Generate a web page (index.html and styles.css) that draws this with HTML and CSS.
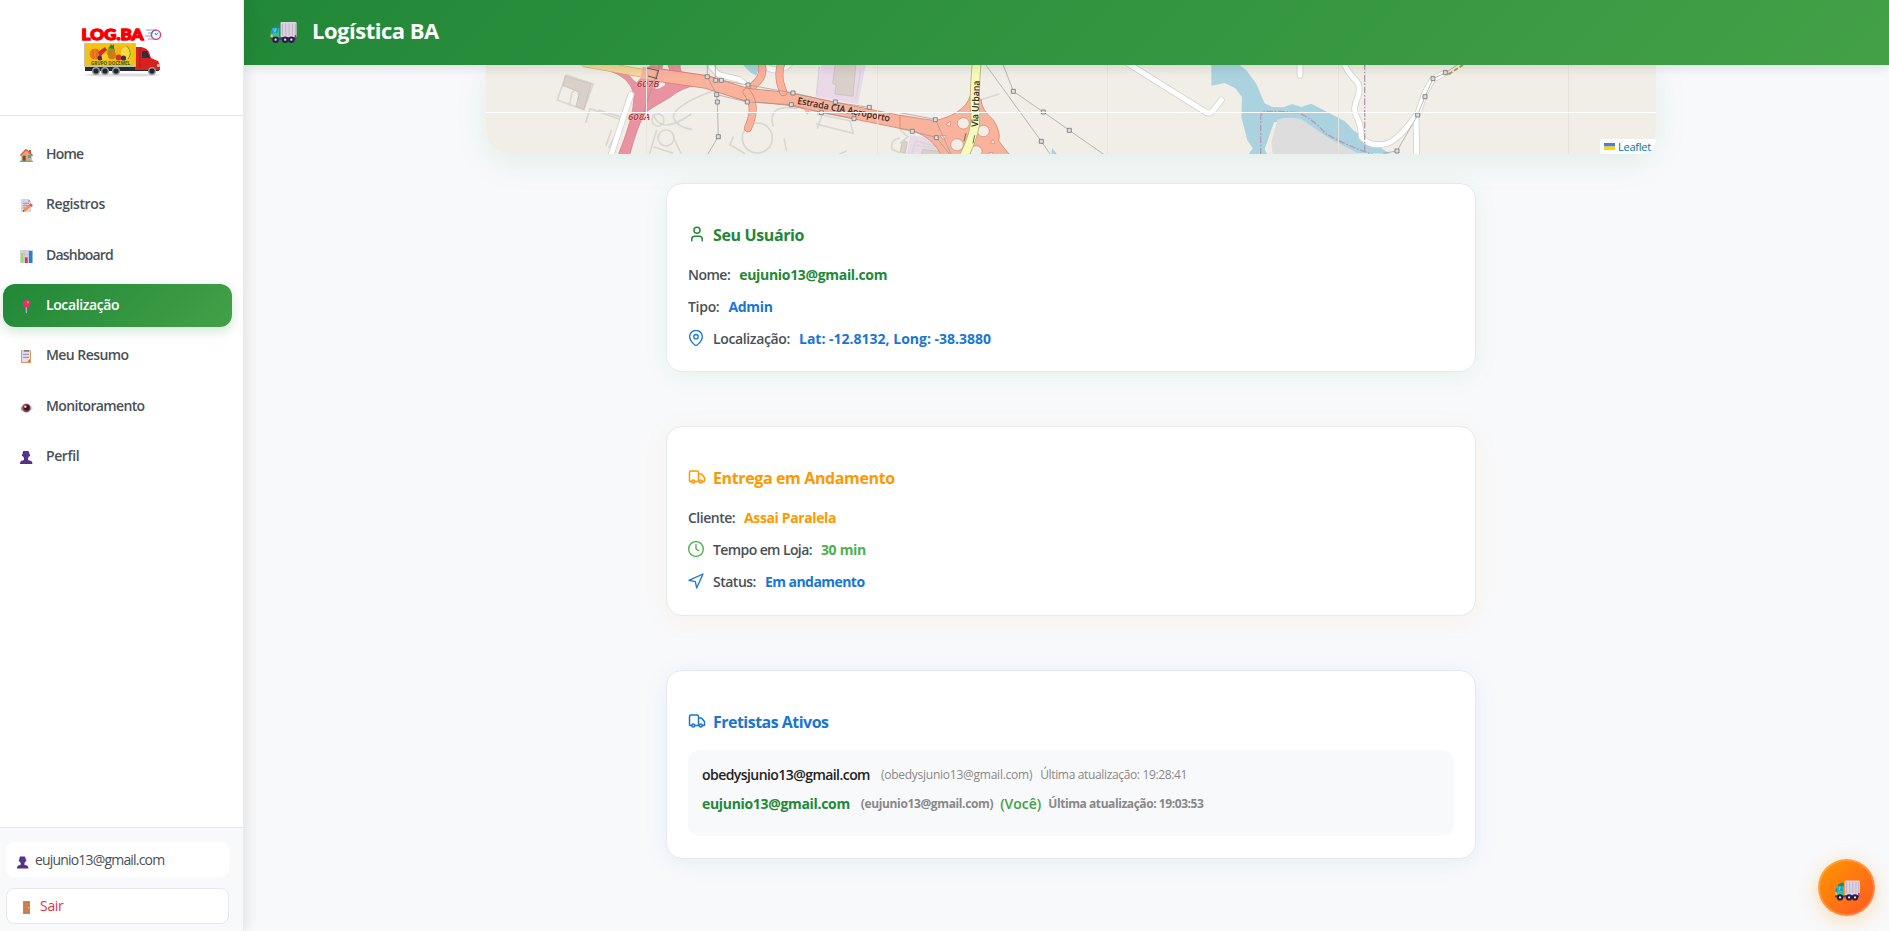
FILE: index.html
```html
<!DOCTYPE html>
<html lang="pt-BR">
<head>
<meta charset="utf-8">
<title>Logística BA</title>
<link rel="stylesheet" href="styles.css">
</head>
<body>
<svg class="defs" width="0" height="0" aria-hidden="true">
  <defs>
    <symbol id="lorry" viewBox="0 0 80 64">
      <path d="M1 30 8 17H27V54H1Z" fill="#3fc380"/><path d="M11 12 20 7H28V18H9Z" fill="#258a58"/>
      <path d="M3 24h5v14H2zM12 18h12v15H10z" fill="#1493df"/><path d="M13 19h6l-3 12h-5z" fill="#5cc9f7"/>
      <path d="M1 38h6v8H1z" fill="#ffc43d"/><path d="M0 48h77v6H0z" fill="#4f3a63"/>
      <path d="M31 2q0-2 2-2h44q3 0 3 3v43H31z" fill="#dcd3e2"/>
      <path d="M37 5v36M47 5v36M57 5v36M67 5v36M76 5v36" stroke="#b5aabd" stroke-width="2.5"/>
      <path d="M74 40h5v8h-5z" fill="#e2196b"/>
      <g fill="#2d1c48"><circle cx="16" cy="54" r="10"/><circle cx="45" cy="54" r="10"/><circle cx="64" cy="54" r="10"/></g>
      <g fill="#e9e3ef"><circle cx="16" cy="54" r="3.5"/><circle cx="45" cy="54" r="3.5"/><circle cx="64" cy="54" r="3.5"/></g>
    </symbol>
    <symbol id="bust" viewBox="0 0 39 39">
      <path d="M10 0h15l3 5v5h2v6h-3l-3 6v5l10 3 3 5v4H0v-4l3-5 9-3v-5l-3-6H6v-6h2V4z" fill="#533285"/>
      <path d="M18 2h7v20h-7z" fill="#633b96" opacity=".6"/>
    </symbol>
    <symbol id="van" viewBox="0 0 24 24">
      <path d="M14 18V6a2 2 0 0 0-2-2H4a2 2 0 0 0-2 2v11a1 1 0 0 0 1 1h2M15 18H9M19 18h2a1 1 0 0 0 1-1v-3.65a1 1 0 0 0-.22-.624l-3.48-4.35A1 1 0 0 0 17.52 8H14"/>
      <circle cx="17" cy="18" r="2"/><circle cx="7" cy="18" r="2"/>
    </symbol>
  </defs>
</svg>
<div class="app">
  <aside class="sidebar">
    <div class="brand">
      <svg class="brand-logo" width="82" height="58" viewBox="0 0 82 58">
        <text class="brand-text" x="0.600" y="12" textLength="62" lengthAdjust="spacingAndGlyphs">LOG.BA</text>
        <g stroke="#8c93bd" stroke-width=".9"><path d="M65 2h9M67 5h7M64 8h8M67 11h8"/></g>
        <circle cx="75" cy="6.7" r="4.6" fill="#eef6fd" stroke="#e23b68" stroke-width="1.3"/>
        <path d="M75 2a4.7 4.7 0 0 0-4 7" fill="none" stroke="#5977b8" stroke-width="1.2"/>
        <path d="M75 7l2-2.2M75 7l-1-2" stroke="#20a1c4" stroke-width="1"/>
        <ellipse cx="41" cy="47" rx="38" ry="1.6" fill="#ddd"/>
        <path d="M4 39h74v4H4z" fill="#262b30"/>
        <path d="M54 19h6q6 1 8 5l2 6 7 3 2 4v5H54z" fill="#d8221f"/>
        <path d="M62 23h4l3 7h-8v-6z" fill="#30303f"/><path d="M59 20v20" stroke="#9f1717" stroke-width=".7"/>
        <path d="M76 36h3v3h-3z" fill="#f5ad9c"/>
        <path d="M3.500 15.500h51v23h-51z" fill="#f4c116" stroke="#c5c3ad"/>
        <ellipse cx="14" cy="26" rx="5.500" ry="5.500" fill="#ef7d1b"/><path d="M12 21v10M16 21v10" stroke="#c95c14" stroke-width=".7"/>
        <path d="M17 24l7-5 2 3-7 7z" fill="#d82a2d"/><path d="M25 30l2-10 4-3 3 4-4 9z" fill="#78a82b"/>
        <circle cx="19" cy="30" r="2.500" fill="#51295b"/><circle cx="24" cy="29" r="3.300" fill="#f8cf20"/>
        <ellipse cx="31" cy="26" rx="4" ry="5.500" fill="#ca7d17"/><path d="M28 20l2-4 1 2 2-2v5z" fill="#39772c"/>
        <circle cx="38" cy="23" r="4" fill="#f3b718"/><ellipse cx="45" cy="25" rx="5" ry="6" fill="#f4df3a"/>
        <path d="M46 18q6 7 1 13" stroke="#79932a" fill="none"/>
        <circle cx="37.500" cy="29.500" r="3" fill="#d9312b"/><circle cx="42.500" cy="30" r="2.600" fill="#41285e"/>
        <text class="brand-sub" x="10" y="36.700" textLength="39" lengthAdjust="spacingAndGlyphs">GRUPO DOCEMEL</text>
        <g fill="#20252a" stroke="#92979b" stroke-width="1.400"><circle cx="15" cy="43" r="3.300"/><circle cx="24" cy="43" r="3.300"/><circle cx="35" cy="43" r="3.300"/><circle cx="71" cy="43" r="3.300"/></g>
      </svg>
    </div>
    <nav class="nav">
      <a class="nav-item"><svg class="nav-icon" viewBox="0 0 39 39"><path d="M27 3h6v12h-6z" fill="#b5533b"/><path d="M4 18 18 4 35 18V36H4z" fill="#e7a574"/><path d="M1 20 17 3h3l18 17" fill="none" stroke="#d9583b" stroke-width="4"/><path d="M8 20h9v16H8z" fill="#744c44"/><path d="M24 18h9v9h-9z" fill="#2dabe9"/><path d="M0 35h39v4H0z" fill="#45bd84"/></svg><span class="t-home">Home</span></a>
      <a class="nav-item"><svg class="nav-icon" viewBox="0 0 39 39"><path d="M3 0h22l8 8v31H3z" fill="#d9d3e3"/><path d="M25 0v8h8z" fill="#a99fb6"/><path d="M9 13h18M9 20h18M9 27h11" stroke="#8c829b" stroke-width="2.500"/><path d="M10 36l3-7 14-12 6 5-15 14z" fill="#f9913c"/><path d="M27 17l5-4 7 6-5 5z" fill="#ec4c63"/><path d="M9 38v-5l5 4z" fill="#37204e"/></svg><span class="t-reg">Registros</span></a>
      <a class="nav-item"><svg class="nav-icon" viewBox="0 0 39 39"><path d="M0 0h39v39H0z" fill="#d5cfde"/><path d="M0 13h39M0 26h39M13 0v39M26 0v39" stroke="#b3acc0" stroke-width="1"/><path d="M3 10h7v28H3z" fill="#94e256"/><path d="M15 22h8v17h-8z" fill="#e32b6c"/><path d="M27 3h10v36H27z" fill="#1689d6"/></svg><span class="t-dash">Dashboard</span></a>
      <a class="nav-item active"><svg class="nav-icon" viewBox="0 0 39 39"><path d="M19 19v20" stroke="#beb2cc" stroke-width="3.500"/><circle cx="19.500" cy="10.500" r="11" fill="#f12c68"/><path d="M21 4h5v5h-5z" fill="#ff91a3"/></svg><span class="t-loc">Localização</span></a>
      <a class="nav-item"><svg class="nav-icon" viewBox="0 0 39 39"><path d="M3 1h30v38H3z" fill="#df9560"/><path d="M6 4h24v24l-7 8H6z" fill="#e5dded"/><path d="M12 0h15v5H12z" fill="#847390"/><path d="M9 13h18M9 22h18" stroke="#827592" stroke-width="2.500"/><path d="M30 27v8h-8z" fill="#c57645"/></svg><span class="t-res">Meu Resumo</span></a>
      <a class="nav-item"><svg class="nav-icon" viewBox="0 0 39 39"><path d="M0 22Q8 7 19 7t20 15Q29 36 19 36T0 22z" fill="#ded7e2"/><path d="M2 25l4-9v15z" fill="#af9bc5"/><circle cx="19" cy="21" r="13" fill="#8b5350"/><circle cx="20" cy="20" r="9" fill="#461326"/><path d="M13 14h6v6h-6z" fill="#fff"/></svg><span class="t-mon">Monitoramento</span></a>
      <a class="nav-item"><svg class="nav-icon"><use href="#bust"/></svg><span class="t-per">Perfil</span></a>
    </nav>
    <div class="side-foot">
      <div class="user-box"><svg class="user-icon"><use href="#bust"/></svg><span class="t-user">eujunio13@gmail.com</span></div>
      <button class="logout"><svg class="door" viewBox="0 0 21 39"><path d="M0 0h21v39H0z" fill="#d8844e"/><path d="M4 5h13v10H4zM4 24h13v10H4z" fill="none" stroke="#b26940" stroke-width="1.500"/><circle cx="17" cy="20" r="2" fill="#ffd043"/></svg><span class="t-sair">Sair</span></button>
    </div>
  </aside>
  <main class="main">
    <header class="topbar"><svg class="top-lorry"><use href="#lorry"/></svg><h1>Logística BA</h1></header>
    <div class="content">
      <section class="map">
        <svg width="1170" height="89" viewBox="0 0 1170 89">
          <path d="M0 0h1170v89H0z" fill="#f1eee7"/>
          <g transform="translate(-6 -15) scale(.33333)">
            <path d="M1026 40h132l-24 122-128-22z" fill="#e9d9e9"/>
            <path d="M785 40h56l-12 37-18-10z" fill="#aad3df"/>
            <g class="track"><path d="M258 74l82 28-29 77M258 74 232 150l84 31M268 168l8-40q14-18 20 6l-3 38M317 218l13-42 90 32M355 180l66 20M420 230l-34 64M394 240l-16 48M520 192q20 66 114 0M700 122q-120 44-120 80 10 30 56 36M530 240l-24 80M580 262l24 50M520 290l60 20M760 260l-10 24 46 28M880 230q-20-70 72-54M912 265l8 40M1010 192l100 20 10 38-112-28M1028 190l-16 46M1060 322l40-20M1018 50l-8 82M1142 60l-14 86"/><circle cx="558" cy="264" r="24"/><circle cx="534" cy="210" r="18"/><circle cx="832" cy="264" r="45"/><path d="M1260 264q-30 4-24 34l24 10"/></g>
            <path class="building" d="M256 78l78 24-22 76-24-9 11-43-50-19zM1066 40h62l-9 99-54-7 3-27-10-5z"/>
            <path d="M380 60Q455 80 462 140 462 200 410 326H446Q478 205 502 183 530 165 570 142 605 112 660 103L615 78Q595 60 602 38H562L575 78 542 70 550 38H515L500 68z" fill="#e892a2" stroke="#d1738a" stroke-width="2"/>
            <path d="M446 74l40 6-16 18q-12-8-24-24zM540 86l14 4 2 16-18 10-14 2z" fill="#f1eee7" stroke="#d1738a"/>
            <g class="casing"><path d="M453 134 388 330M694 50l22 24 60 14 22 16M845 40q42 40 86 0"/></g>
            <g class="white"><path d="M453 134 388 330M694 50l22 24 60 14 22 16M845 40q42 40 86 0"/></g>
            <path d="M310 38 490 70" stroke="#d3b36d" stroke-width="26"/><path d="M305 37 500 72" stroke="#f8d69b" stroke-width="22"/>
            <path d="M500 70 680 96 800 134 920 146 1270 218" class="road-edge"/><path d="M485 68 680 96 800 134 920 146 1270 218" class="road"/>
            <path d="M845 40q10 40-24 66M904 40q-14 40 6 86M800 126q34 42 4 108" fill="none" stroke="#df806d" stroke-width="24" stroke-linecap="round"/>
            <path d="M845 40q10 40-24 66M904 40q-14 40 6 86M800 126q34 42 4 108" fill="none" stroke="#f9b29c" stroke-width="20" stroke-linecap="round"/>
            <path d="M970 176h30l-18 18z" fill="#f9b29c"/>
            <g class="wire"><path d="M682 40v40l28 54 2 22 3 104-34 56M706 40v50l18 1 80 14 136 24 126 28 102 15M710 134l92 22 132 8 90 24 98 18M540 40 490 190"/></g>
            <g class="node"><path d="M676 74h12v12h-12zM701 85h12v12h-12zM718 85h12v12h-12zM798 99h12v12h-12zM704 128h12v12h-12zM706 150h12v12h-12zM796 150h12v12h-12zM709 254h12v12h-12zM933 123h12v12h-12zM928 158h12v12h-12zM1060 150h12v12h-12zM1162 166h12v12h-12zM1018 182h12v12h-12zM1116 200h12v12h-12z"/></g>
            <path d="M500 54l36 8M504 78l28 8M528 88l8-28" fill="none" stroke="#605050" stroke-width="3"/>
            <text class="exit" x="470" y="112" textLength="68" lengthAdjust="spacingAndGlyphs">607B</text><text class="exit" x="444" y="209" textLength="66" lengthAdjust="spacingAndGlyphs">608A</text>
            <text class="road-name" transform="translate(951 161) rotate(11)" textLength="282" lengthAdjust="spacingAndGlyphs">Estrada CIA Aeroporto</text>
          </g>
          <g transform="translate(414 -15) scale(.33333)">
            <path d="M30 256l74 8 44 60H20z" fill="#e9d9e9"/><path class="building" d="M8 270l14 6-6 34-16-4zM68 298l48 6v14H64z"/>
            <path class="track" d="M0 240l24 20-24 20M36 310l12-38 60 18M50 285l56 12M240 150l58-18"/>
            <path d="M0 196l106 16q102-24 108-92l30 30q-2 26 36 60 24 38 16 62 28 40 50 58H130Q98 246 0 235z" fill="#f9b29c" stroke="#dc836f" stroke-width="2.500"/>
            <g fill="#f1eee7" stroke="#dc836f" stroke-width="2"><ellipse cx="190" cy="220" rx="18" ry="17"/><ellipse cx="250" cy="243" rx="18" ry="17"/><ellipse cx="171" cy="284" rx="19" ry="18"/><ellipse cx="228" cy="304" rx="18" ry="17"/><path d="M138 224l13-11v16zM272 279l7-12 5 14zM120 257h20l-10 12zM266 308h14l-6 8z"/></g>
            <path d="M230 38q-10 122-4 154 4 54-36 130" fill="none" stroke="#b5b56f" stroke-width="29"/><path d="M230 38q-10 122-4 154 4 54-36 130" fill="none" stroke="#f6fabb" stroke-width="24"/>
            <path d="M198 250l-6 24M224 256l-5 24" stroke="#666" stroke-width="3"/>
            <path class="wire" d="M0 188l106 20 30 66 20 44M0 236l36 8 72 18 46 56M254 40l170 234 34 50M308 40l32 84 90 62 78 55 120 84"/>
            <path class="node" d="M100 203h12v12h-12zM31 238h12v12H31zM103 257h12v12h-12zM334 118h12v12h-12zM424 180h12v12h-12zM502 235h12v12h-12zM418 268h12v12h-12z"/>
            <path d="M456 294l18 22h-20z" fill="#aad3df"/>
            <path class="casing" d="M680 38 910 182q18 16 32-4l22-28"/><path class="white" d="M680 38 910 182q18 16 32-4l22-28"/>
            <path d="M934 40h78l27 20 30 42 25 58 22 11 34 1 26-10 28 9 30-10 100 52 26 28 110 70-122-2-56-30-68-42-48-12-26-12-28 4-28 80 14 30H1036l22-32-16-24-18-70 2-60-20-26-32-16-40 8z" fill="#aad3df"/>
            <path d="M1132 210q26-12 72-2l82 56 100 52H1118l-4-40z" fill="#ddd"/>
            <path d="M1082 314V196l12-12h40l62 4q44 20 80 62 60 36 150 66" class="boundary"/>
          </g>
          <g transform="translate(794 -15) scale(.33333)">
            <path class="casing" d="M60 38v38M192 40q8 22 34 50 18 16 8 50-18 40-4 60 14 30 14 60 26 34 80 20 30-12 76-72l14-18 20-60 24-42 38-20M408 200l2 120"/>
            <path class="white" d="M60 38v38M192 40q8 22 34 50 18 16 8 50-18 40-4 60 14 30 14 60 26 34 80 20 30-12 76-72l14-18 20-60 24-42 38-20M408 200l2 120"/>
            <path class="boundary" d="M254 40v266"/>
            <path class="wire" d="M310 310l41-7 62-108 22-55 24-54 38-18 36-24"/><path d="M505 73l44-28" stroke="#c2964a" stroke-width="6" stroke-dasharray="14 6"/>
            <path class="node" d="M453 80h12v12h-12zM490 62h12v12h-12zM429 134h12v12h-12zM407 189h12v12h-12zM345 297h12v12h-12z"/>
          </g>
          <g transform="translate(414 -15) scale(.33333)"><text class="road-name" transform="translate(234 231) rotate(-88)" textLength="139" lengthAdjust="spacingAndGlyphs">Via Urbana</text></g>
          <path d="M160.500 0v89M391.500 0v89M621.500 0v89M852.500 0v89M1082.500 0v89" stroke="#e7e4e0"/>
          <path d="M0 47.500h1170" stroke="#fff"/>
        </svg>
        <div class="attribution"><svg width="11" height="7" viewBox="0 0 11 7"><path d="M0 0h11v3.500H0z" fill="#4c7be1"/><path d="M0 3.500h11V7H0z" fill="#ffd500"/></svg><span>Leaflet</span></div>
      </section>
      <section class="card green">
        <h2><svg class="icon big" viewBox="0 0 24 24"><path d="M19 21v-2a4 4 0 0 0-4-4H9a4 4 0 0 0-4 4v2"/><circle cx="12" cy="7" r="4"/></svg><span class="t-seu">Seu Usuário</span></h2>
        <p class="row"><span class="t-nome">Nome:</span><b class="v-green t-mail">eujunio13@gmail.com</b></p>
        <p class="row"><span class="t-tipo">Tipo:</span><b class="v-blue t-admin">Admin</b></p>
        <p class="row"><svg class="icon c-blue" viewBox="0 0 24 24"><path d="M21.500 10c0 5.500-6 11-8.200 12.900a2 2 0 0 1-2.600 0C8.500 21 2.500 15.500 2.500 10a9.500 9.500 0 0 1 19 0"/><circle cx="12" cy="10" r="3.300"/></svg><span class="t-local">Localização:</span><b class="v-blue t-lat">Lat: -12.8132, Long: -38.3880</b></p>
      </section>
      <section class="card orange">
        <h2><svg class="icon big"><use href="#van"/></svg><span class="t-ent">Entrega em Andamento</span></h2>
        <p class="row"><span class="t-cli">Cliente:</span><b class="v-orange t-assai">Assai Paralela</b></p>
        <p class="row"><svg class="icon c-lime" viewBox="0 0 24 24"><circle cx="12" cy="12" r="11"/><path d="M12 5v7l4 2.500"/></svg><span class="t-tempo">Tempo em Loja:</span><b class="v-lime t-min">30 min</b></p>
        <p class="row"><svg class="icon c-blue" viewBox="0 0 24 24"><path d="M1.500 11 22.500 1.500 13 22.500 11 13z"/></svg><span class="t-status">Status:</span><b class="v-blue t-em">Em andamento</b></p>
      </section>
      <section class="card blue">
        <h2><svg class="icon big"><use href="#van"/></svg><span class="t-fret">Fretistas Ativos</span></h2>
        <div class="drivers">
          <p class="driver"><b class="t-d1">obedysjunio13@gmail.com</b><small class="t-p1">(obedysjunio13@gmail.com)</small><small class="t-u1">Última atualização: 19:28:41</small></p>
          <p class="driver me"><b class="t-mail">eujunio13@gmail.com</b><small class="t-p2">(eujunio13@gmail.com)</small><em class="t-voce">(Você)</em><small class="t-u2">Última atualização: 19:03:53</small></p>
        </div>
      </section>
    </div>
  </main>
</div>
<button class="fab"><svg class="fab-lorry"><use href="#lorry"/></svg></button>
</body>
</html>
```
FILE: styles.css
```css
* { box-sizing: border-box; }
body { margin: 0; background: #f8f9fb; color: #495057; font: 14px/20px "Open Sans", "Noto Sans", sans-serif; overflow: hidden; }
.defs { position: absolute; }
.app { display: flex; height: 931px; }
.sidebar { width: 244px; flex: none; display: flex; flex-direction: column; background: #fff; border-right: 1px solid #e9ecef; box-shadow: 2px 0 12px rgba(0,0,0,.1); z-index: 3; }
.brand { height: 116px; border-bottom: 1px solid #e5e8eb; padding: 28px 0 0 81px; }
.brand-logo { display: block; overflow: visible; }
.brand-text { font: 900 15.500px Lato, sans-serif; fill: #f40000; stroke: #f40000; stroke-width: 1.300; }
.brand-sub { font: bold 5px "Open Sans", sans-serif; fill: #335014; }
.nav { display: flex; flex-direction: column; gap: 7.350px; padding: 17px 11px 0 3px; flex: 1; }
.nav-item { height: 43px; flex: none; border-radius: 12px; display: flex; align-items: center; gap: 13px; padding: 0 0 1px 17px; font-weight: 600; }
.nav-icon { width: 13px; height: 13px; flex: none; margin-top: 3px; }
.nav-item.active { background: linear-gradient(135deg, #218838, #43a047); color: #fff; box-shadow: 0 4px 12px rgba(33,136,56,.22); }
.side-foot { height: 104px; flex: none; border-top: 1px solid #e5e8eb; background: #f8f9fb; padding: 14px 14px 0 6px; display: flex; flex-direction: column; gap: 11px; }
.user-box { height: 35px; background: #fff; border-radius: 7px; display: flex; align-items: center; padding-left: 11px; gap: 6px; }
.user-icon { width: 12px; height: 13px; margin-top: 6px; }
.logout { height: 36px; border: 1px solid #e5e9ee; border-radius: 8px; background: #fff; color: #dc3545; font: inherit; display: flex; align-items: center; padding: 0 0 0 16px; gap: 10px; }
.door { width: 7px; height: 13px; margin-top: 3px; }
.main { flex: 1; display: flex; flex-direction: column; min-width: 0; }
.topbar { height: 65px; flex: none; display: flex; align-items: center; padding: 0 0 3px 26px; gap: 15px; color: #fff; background: linear-gradient(135deg, #218838, #43a047); box-shadow: 0 2px 12px rgba(0,0,0,.12); z-index: 2; }
.top-lorry { width: 27px; height: 21px; margin-top: 2px; }
h1 { margin: 0 0 3px; font-size: 22px; line-height: 30px; font-weight: 700; letter-spacing: -.5px; }
.content { flex: 1; display: flex; flex-direction: column; align-items: center; padding-left: 9px; }
.map { position: relative; width: 1170px; height: 89px; flex: none; border-radius: 0 0 24px 24px; box-shadow: 0 8px 32px rgba(33,136,56,.1); }
.map > svg { display: block; border-radius: 0 0 24px 24px; }
.attribution { position: absolute; right: 0; bottom: 0; width: 56px; height: 15px; background: rgba(255,255,255,.8); border-bottom-right-radius: 24px 24px; display: flex; align-items: center; gap: 3px; padding-left: 4px; color: #0078a8; font: 11px/15px "Open Sans", sans-serif; letter-spacing: -.25px; }
.track { fill: none; stroke: #d8d7d3; stroke-width: 5; }
.casing { fill: none; stroke: #d6d3ce; stroke-width: 20; stroke-linecap: round; stroke-linejoin: round; }
.white { fill: none; stroke: #fff; stroke-width: 15; stroke-linecap: round; stroke-linejoin: round; }
.building { fill: #d9d0c9; stroke: #c6b9ae; stroke-width: 2; }
.road { fill: none; stroke: #f9b29c; stroke-width: 36; }
.road-edge { fill: none; stroke: #df806d; stroke-width: 41; }
.wire { fill: none; stroke: #999; stroke-width: 2.500; opacity: .8; }
.node { fill: #ddd; stroke: #777; stroke-width: 2.500; }
.boundary { fill: none; stroke: #b698b9; stroke-width: 4; stroke-dasharray: 20 5 5 5; }
.exit { font: italic 600 28px "Noto Sans", sans-serif; fill: #b4393c; paint-order: stroke; stroke: #f0dcd9; stroke-width: 2; }
.road-name { font: 500 28px "Noto Sans", sans-serif; fill: #352b24; stroke: #352b24; stroke-width: .3; }
.card { width: 810px; height: 189px; flex: none; margin-top: 29px; padding: 41px 21px 0; border: 1px solid #e5eaed; border-radius: 16px; background: #fff; }
.card.orange { height: 190px; margin-top: 54px; }
.card.blue { height: 189px; margin-top: 54px; }
.green { box-shadow: 0 4px 24px rgba(33,136,56,.08); }
.orange { box-shadow: 0 4px 24px rgba(255,152,0,.08); }
.blue { box-shadow: 0 4px 24px rgba(25,118,210,.08); }
h2 { margin: 0 0 20px; height: 20px; display: flex; align-items: center; gap: 7px; font-size: 16px; line-height: 20px; font-weight: 700; }
.green h2 { color: #218838; }
.orange h2 { color: #ff9800; }
.blue h2 { color: #1976d2; margin-bottom: 18px; }
.icon { width: 16px; height: 16px; flex: none; fill: none; stroke: currentColor; stroke-width: 2; stroke-linecap: round; stroke-linejoin: round; }
.big { width: 18px; height: 18px; margin-top: -2px; }
.row { margin: 0 0 12px; height: 20px; display: flex; align-items: center; gap: 9px; font-weight: 600; }
.row .icon { margin-top: -3px; }
.row b { font-weight: 700; }
.c-blue, .v-blue { color: #1976d2; }
.v-green { color: #218838; }
.v-orange { color: #ff9800; }
.c-lime, .v-lime { color: #4caf50; }
.drivers { height: 86px; padding: 15px 14px; border-radius: 12px; background: #f8f9fb; }
.driver { margin: 0 0 9px; height: 20px; display: flex; align-items: center; color: #222; font-weight: 600; white-space: nowrap; }
.driver b { font-weight: 600; margin-right: 11px; }
.driver small { font-size: 12px; color: #888; font-weight: 400; margin-right: 8px; }
.driver.me { color: #218838; }
.driver.me b { font-weight: 700; }
.driver.me small { font-weight: 700; margin-right: 7px; }
.driver em { font-style: normal; color: #43a047; margin-right: 7px; }
.fab { position: fixed; right: 14px; bottom: 15px; width: 57px; height: 57px; border-radius: 50%; border: 2px solid rgba(255,255,255,.2); background: linear-gradient(135deg, #ff9800, #ff5722) border-box; box-shadow: 0 4px 20px rgba(255,152,0,.3); padding: 0; display: flex; align-items: center; justify-content: center; z-index: 4; }
.fab-lorry { width: 25px; height: 21px; margin: 5px 0 0 2px; }

/* Tracking per label */
.t-home { letter-spacing: -.8px; }
.t-reg, .t-loc, .t-per { letter-spacing: -.4px; }
.t-dash { letter-spacing: -.8px; }
.t-res { letter-spacing: -.55px; }
.t-mon { letter-spacing: -.65px; }
.t-user { letter-spacing: -.82px; }
.t-sair { letter-spacing: -.3px; }
.t-seu, .t-ent { letter-spacing: -.37px; }
.t-nome { letter-spacing: -.5px; }
.t-tipo, .t-admin, .t-min { letter-spacing: -.3px; }
.t-mail { letter-spacing: -.32px; }
.t-local { letter-spacing: -.36px; }
.t-cli, .t-status { letter-spacing: -.5px; }
.t-assai { letter-spacing: -.38px; }
.t-tempo { letter-spacing: -.6px; }
.t-em { letter-spacing: -.55px; }
.t-fret { letter-spacing: -.52px; }
.t-d1 { letter-spacing: -.56px; }
.t-p1 { letter-spacing: -.25px; }
.t-u1 { letter-spacing: -.35px; }
.t-p2 { letter-spacing: -.37px; }
.t-u2 { letter-spacing: -.43px; }
```
